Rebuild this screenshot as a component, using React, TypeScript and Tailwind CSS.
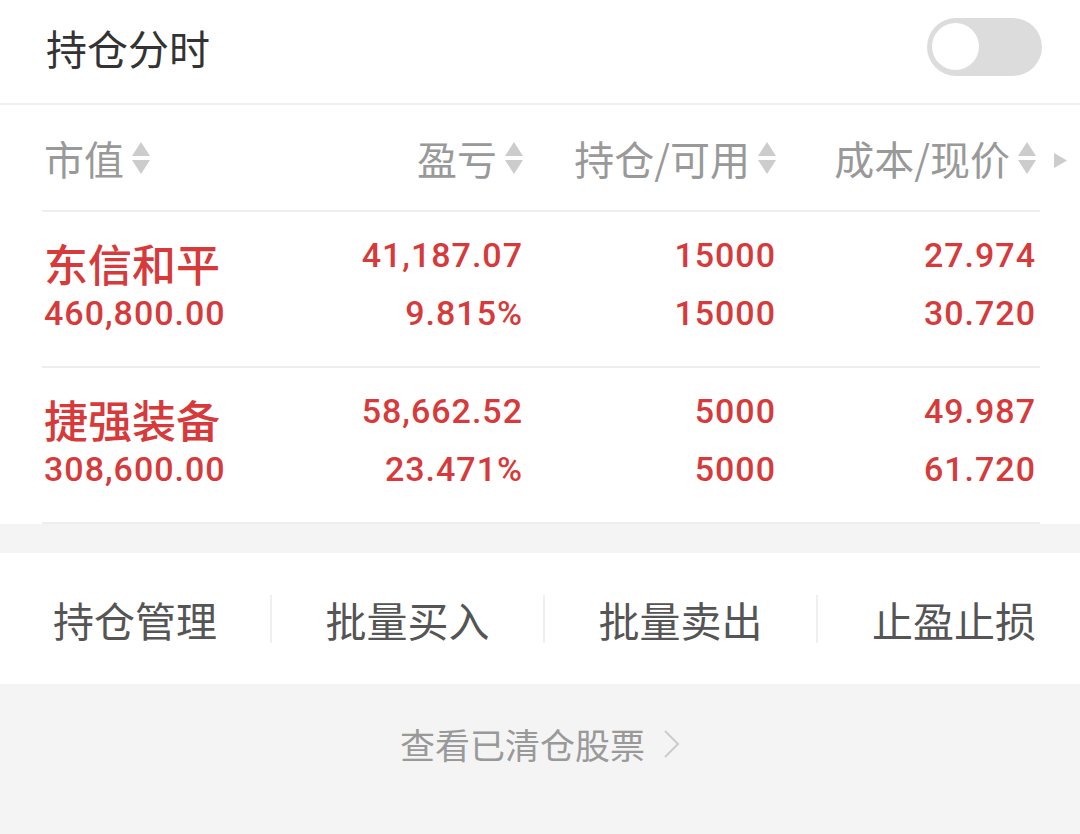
import React from 'react';

const CJK = "font-['Noto_Sans_CJK_SC',sans-serif]";
const NUM = "font-[Roboto,'Noto_Sans_CJK_SC',sans-serif]";
const COLS = 'grid grid-cols-[232px_247px_253px_260px]';

interface Holding {
  name: string;
  value: string;
  profit: string;
  ratio: string;
  hold: string;
  usable: string;
  cost: string;
  price: string;
}

const holdings: Holding[] = [
  {
    name: '东信和平',
    value: '460,800.00',
    profit: '41,187.07',
    ratio: '9.815%',
    hold: '15000',
    usable: '15000',
    cost: '27.974',
    price: '30.720'
  },
  {
    name: '捷强装备',
    value: '308,600.00',
    profit: '58,662.52',
    ratio: '23.471%',
    hold: '5000',
    usable: '5000',
    cost: '49.987',
    price: '61.720'
  }
];

function SortArrows() {
  return (
    <svg width="18" height="32" viewBox="0 0 18 32" className="ml-[8px] shrink-0">
      <polygon points="0,14 9,0 18,14" fill="#cccccc" />
      <polygon points="0,18 18,18 9,32" fill="#cccccc" />
    </svg>
  );
}

function HeaderCell({ label, right }: { label: string; right?: boolean }) {
  return (
    <div className={`flex items-center ${right ? 'justify-end' : ''}`}>
      <span className="text-[40px] leading-[44px] text-[#999999]">{label}</span>
      <SortArrows />
    </div>
  );
}

function NumCell({ top, bottom }: { top: string; bottom: string }) {
  return (
    <div className={`flex flex-col items-end pt-[14px] ${NUM} text-[34px] font-medium tracking-[1px] text-[#d63a3a]`}>
      <div className="leading-[58px]">{top}</div>
      <div className="leading-[58px]">{bottom}</div>
    </div>
  );
}

function Sep() {
  return <div className="w-[2px] h-[48px] bg-[#f0f0f0] shrink-0" />;
}

export default function App() {
  return (
    <div className={`min-h-screen bg-[#f4f4f4] ${CJK}`}>
      <div className="bg-white">
        <div className="h-[105px] flex items-center justify-between pl-[46px] pr-[38px] pb-[10px] border-b-2 border-[#f0f0f0]">
          <span className="text-[41px] leading-[46px] text-[#333333]">持仓分时</span>
          <div className="w-[115px] h-[58px] rounded-full bg-[#dcdcdc] p-[5px] flex items-center">
            <div className="w-[47px] h-[47px] rounded-full bg-white" />
          </div>
        </div>

        <div className="flex">
          <div className="ml-[42px] w-[998px] h-[107px] border-b-2 border-[#eeeeee] flex items-center pl-[2px]">
            <div className={`${COLS} w-full`}>
              <HeaderCell label="市值" />
              <HeaderCell label="盈亏" right />
              <HeaderCell label="持仓/可用" right />
              <HeaderCell label="成本/现价" right />
            </div>
          </div>
          <div className="flex-1 flex items-center justify-center pt-[4px]">
            <svg width="13" height="15" viewBox="0 0 13 15">
              <polygon points="0,0 13,7.5 0,15" fill="#cccccc" />
            </svg>
          </div>
        </div>

        {holdings.map(h => (
          <div key={h.name} className="ml-[42px] w-[998px] h-[156px] border-b-2 border-[#eeeeee] pl-[2px]">
            <div className={COLS}>
              <div className="flex flex-col items-start text-[#d63a3a]">
                <div className="pt-[22px] text-[44px] leading-[58px] font-medium">{h.name}</div>
                <div className={`${NUM} text-[34px] font-medium tracking-[1px] leading-[42px]`}>{h.value}</div>
              </div>
              <NumCell top={h.profit} bottom={h.ratio} />
              <NumCell top={h.hold} bottom={h.usable} />
              <NumCell top={h.cost} bottom={h.price} />
            </div>
          </div>
        ))}
      </div>

      <div className="h-[29px]" />

      <div className="bg-white h-[131px] flex items-center text-[41px] leading-[48px] text-[#555555]">
        <div className="w-[270px] text-center">持仓管理</div>
        <Sep />
        <div className="w-[271px] text-center">批量买入</div>
        <Sep />
        <div className="w-[271px] text-center">批量卖出</div>
        <Sep />
        <div className="flex-1 pl-[54px]">止盈止损</div>
      </div>

      <div className="flex items-center justify-center pt-[40px]">
        <span className="text-[35px] leading-[40px] text-[#999999]">查看已清仓股票</span>
        <svg width="17" height="28" viewBox="0 0 17 28" className="ml-[18px]">
          <polyline points="2,1 15,14 2,27" fill="none" stroke="#cccccc" strokeWidth="2" />
        </svg>
      </div>
    </div>
  );
}
